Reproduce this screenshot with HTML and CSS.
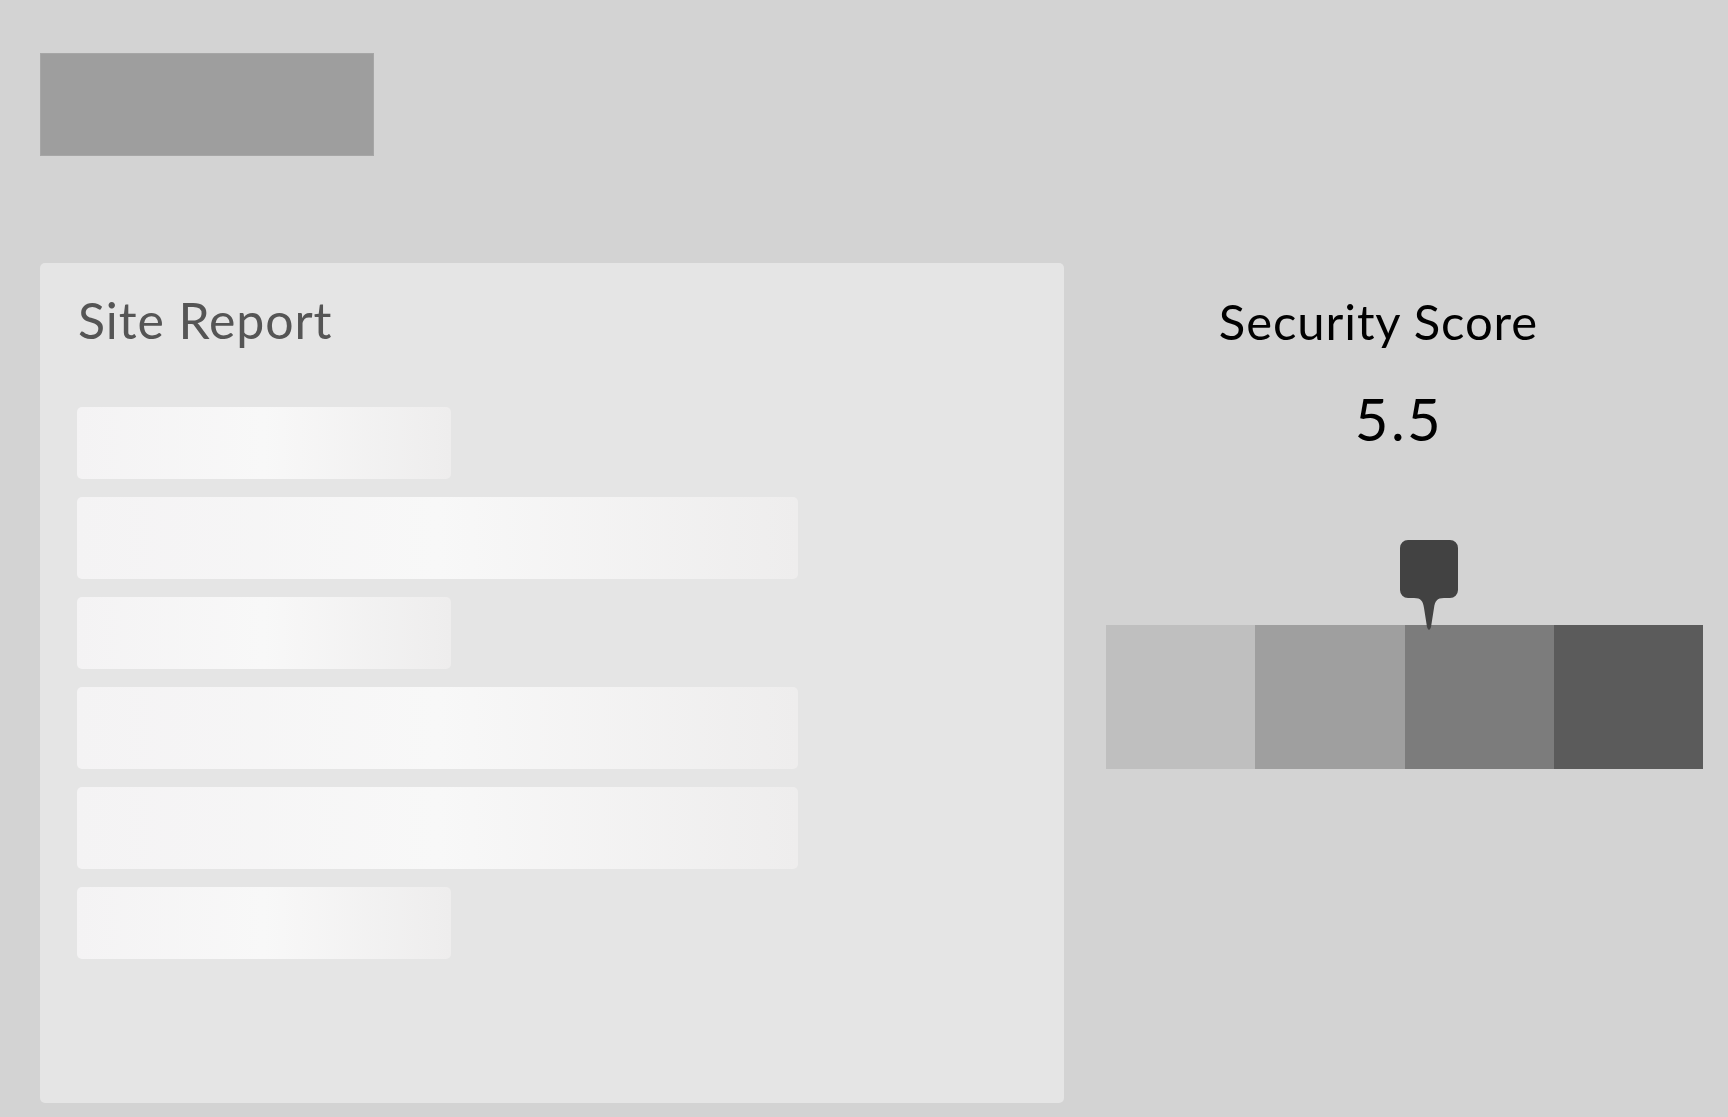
FILE: index.html
```html
<!DOCTYPE html>
<html lang="en">
<head>
<meta charset="utf-8">
<title>Site Report</title>
<link rel="stylesheet" href="styles.css">
</head>
<body>
  <header class="top">
    <div class="logo-block"></div>
  </header>
  <main class="content">
    <section class="card">
      <h2 class="card-title">Site Report</h2>
      <div class="skeleton-list">
        <div class="skeleton short"></div>
        <div class="skeleton long"></div>
        <div class="skeleton short"></div>
        <div class="skeleton long"></div>
        <div class="skeleton long"></div>
        <div class="skeleton short"></div>
      </div>
    </section>
    <aside class="score">
      <h2 class="score-title">Security Score</h2>
      <div class="score-value">5.5</div>
      <div class="meter">
        <svg class="pin" width="58" height="92" viewBox="0 0 58 92" aria-hidden="true">
          <path d="M8 0 H50 A8 8 0 0 1 58 8 V50 A8 8 0 0 1 50 58 H44 C37 58 35 61 34 68 L31 87 Q29 93 27 87 L24 68 C23 61 21 58 14 58 H8 A8 8 0 0 1 0 50 V8 A8 8 0 0 1 8 0 Z" fill="#424242"/>
        </svg>
        <div class="segments">
          <div class="seg seg-1"></div>
          <div class="seg seg-2"></div>
          <div class="seg seg-3"></div>
          <div class="seg seg-4"></div>
        </div>
      </div>
    </aside>
  </main>
</body>
</html>
```
FILE: styles.css
```css
html, body {
  margin: 0;
  padding: 0;
}
body {
  background: #d3d3d3;
  font-family: Lato, "Open Sans", "Liberation Sans", sans-serif;
  width: 1728px;
  height: 1117px;
  overflow: hidden;
}
.top {
  padding: 53px 0 0 40px;
}
.logo-block {
  width: 334px;
  height: 103px;
  box-sizing: border-box;
  background: #9e9e9e;
  border: 1px solid #a6a6a6;
}
.content {
  display: flex;
  align-items: flex-start;
  padding: 107px 0 0 40px;
}
.card {
  width: 1024px;
  height: 840px;
  box-sizing: border-box;
  background: #e5e5e5;
  border-radius: 5px;
  padding: 27px 37px 0 37px;
}
.card-title {
  margin: 0;
  font-weight: 400;
  font-size: 50px;
  line-height: 60px;
  letter-spacing: 0.9px;
  color: #555555;
  padding-left: 1px;
}
.skeleton-list {
  display: flex;
  flex-direction: column;
  gap: 18px;
  margin-top: 57px;
}
.skeleton {
  border-radius: 5px;
  background: linear-gradient(90deg, #f4f3f4 0%, #f8f8f8 50%, #eeeded 100%);
}
.skeleton.short {
  width: 374px;
  height: 72px;
}
.skeleton.long {
  width: 721px;
  height: 82px;
}
.score {
  width: 597px;
  margin-left: 42px;
  padding-top: 28px;
  display: flex;
  flex-direction: column;
}
.score-title {
  margin: 0;
  font-weight: 400;
  font-size: 49px;
  line-height: 60px;
  letter-spacing: 0.9px;
  color: #000;
  text-align: center;
  padding-right: 52px;
}
.score-value {
  margin-top: 33px;
  font-size: 58px;
  line-height: 70px;
  letter-spacing: 2.5px;
  color: #000;
  text-align: center;
  padding-right: 11px;
}
.meter {
  position: relative;
  margin-top: 86px;
  padding-top: 85px;
}
.pin {
  position: absolute;
  top: 0;
  left: 294px;
  z-index: 1;
}
.segments {
  display: flex;
  height: 144px;
}
.seg {
  flex: 1;
}
.seg-1 { background: #bfbfbf; }
.seg-2 { background: #9f9f9f; }
.seg-3 { background: #7c7c7c; }
.seg-4 { background: #5b5b5b; }
```
